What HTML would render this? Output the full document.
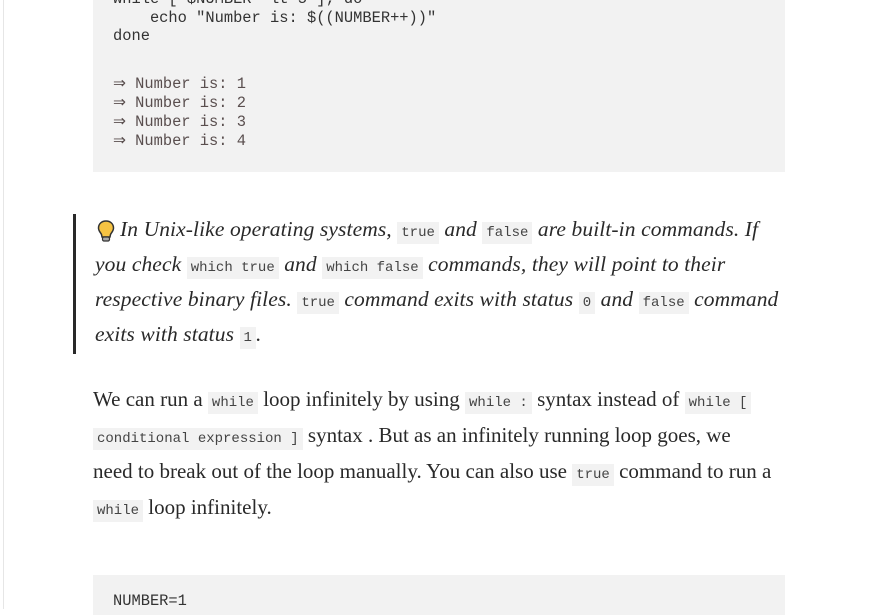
<!DOCTYPE html>
<html><head><meta charset="utf-8"><style>
body{margin:0;width:872px;height:609px;overflow:hidden;background:#fff;position:relative;font-family:"Liberation Serif",serif;color:#292929}
.edge{position:absolute;left:3px;top:0;width:1px;height:609px;background:#e6e6e6}
.pre{position:absolute;left:93px;width:692px;background:#f2f2f2}
.pre div{position:absolute;left:20px;font-family:"Liberation Mono",monospace;font-size:15.4px;white-space:pre;color:#333;line-height:19px}
.out{color:#5a4f4f !important}
.l{position:absolute;white-space:nowrap;font-size:21.5px;line-height:35px;letter-spacing:0.1px}
.p{font-size:21px;letter-spacing:0}
.i{font-style:italic}
code{font-family:"Liberation Mono",monospace;font-size:14px;background:#f2f2f2;padding:3px 4px;font-style:normal;color:#444;letter-spacing:0}
.bar{position:absolute;left:73px;top:214px;width:3px;height:140px;background:#292929}
</style></head><body>
<div class="edge"></div>
<div class="pre" style="top:0;height:172px">
<div style="top:-10px">while [ $NUMBER -lt 5 ]; do</div>
<div style="top:9px">    echo "Number is: $((NUMBER++))"</div>
<div style="top:27px">done</div>
<div class="out" style="top:75px">⇒ Number is: 1</div>
<div class="out" style="top:94px">⇒ Number is: 2</div>
<div class="out" style="top:113px">⇒ Number is: 3</div>
<div class="out" style="top:132px">⇒ Number is: 4</div>
</div>
<div class="bar"></div>
<svg style="position:absolute;left:96px;top:219px" width="20" height="24" viewBox="0 0 20 24"><path d="M10 2C5.5 2 2.5 5 2.5 9c0 3 2 4.5 3 6.5L6 18h8l.5-2.5c1-2 3-3.5 3-6.5 0-4-3-7-7.5-7z" fill="#f6c343" stroke="#333" stroke-width="1.5"/><rect x="6.5" y="18" width="7" height="4" rx="1.5" fill="#aaa" stroke="#333" stroke-width="1.2"/></svg>
<div class="l i" style="left:120px;top:212px">In Unix-like operating systems, <code>true</code> and <code>false</code> are built-in commands. If</div>
<div class="l i" style="left:95px;top:247px">you check <code>which true</code> and <code>which false</code> commands, they will point to their</div>
<div class="l i" style="left:95px;top:282px">respective binary files. <code>true</code> command exits with status <code>0</code> and <code>false</code> command</div>
<div class="l i" style="left:95px;top:317px">exits with status <code>1</code>.</div>
<div class="l p" style="left:93px;top:382px">We can run a <code>while</code> loop infinitely by using <code>while :</code> syntax instead of <code>while [</code></div>
<div class="l p" style="left:93px;top:418px"><code>conditional expression ]</code> syntax . But as an infinitely running loop goes, we</div>
<div class="l p" style="left:93px;top:454px">need to break out of the loop manually. You can also use <code>true</code> command to run a</div>
<div class="l p" style="left:93px;top:490px"><code>while</code> loop infinitely.</div>
<div class="pre" style="top:575px;height:40px">
<div style="top:17px">NUMBER=1</div>
</div>
</body></html>
